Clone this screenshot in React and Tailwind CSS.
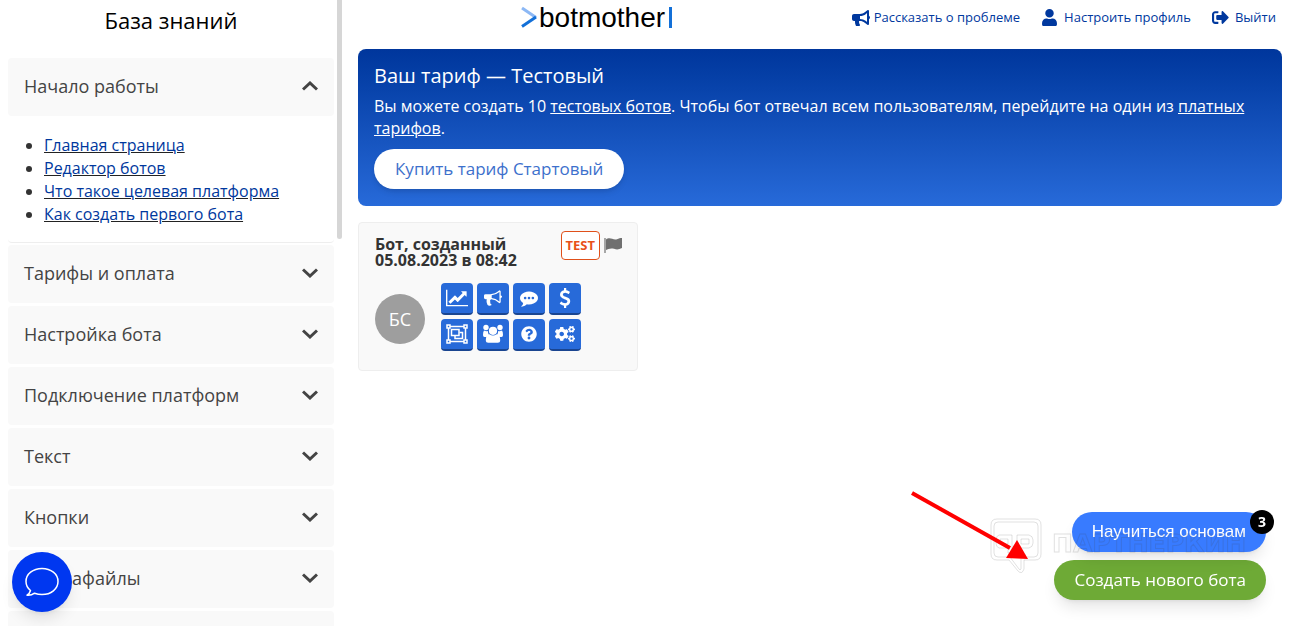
import { FaBullhorn, FaUser, FaSignOutAlt, FaQuestionCircle, FaCogs } from 'react-icons/fa'

const ARTICLES = [
  'Главная страница',
  'Редактор ботов',
  'Что такое целевая платформа',
  'Как создать первого бота',
]

const SECTIONS = [
  'Тарифы и оплата',
  'Настройка бота',
  'Подключение платформ',
  'Текст',
  'Кнопки',
  'Медиафайлы',
  '',
]

function LineChart() {
  return (
    <svg viewBox="0 0 2048 1792" className="h-5 w-[22px]" fill="currentColor">
      <path d="M2048 1536v128h-2048v-1536h128v1408h1920zm-128-1248v435q0 21-19.5 29.5t-35.5-7.5l-121-121-633 633q-10 10-23 10t-23-10l-233-233-416 416-192-192 585-585q10-10 23-10t23 10l233 233 464-464-121-121q-16-16-7.5-35.5t29.5-19.5h435q14 0 23 9t9 23z" />
    </svg>
  )
}

function Horn() {
  return (
    <svg viewBox="0 0 1792 1792" className="size-[18px]" fill="currentColor">
      <path d="M1664 640q53 0 90.5 37.5t37.5 90.5-37.5 90.5-90.5 37.5v384q0 52-38 90t-90 38q-417-347-812-380-58 19-91 66t-31 100.5 40 92.5q-20 33-23 65.5t6 58 33.5 55 48 50 61.5 50.5q-29 58-111.5 83t-168.5 11.5-132-55.5q-7-23-29.5-87.5t-32-94.5-23-89-15-101 3.5-98.5 22-110.5h-122q-66 0-113-47t-47-113v-192q0-66 47-113t113-47h480q435 0 896-384 52 0 90 38t38 90v384zm-128 604v-954q-394 302-768 343v270q377 42 768 341z" />
    </svg>
  )
}

function Comment() {
  return (
    <svg viewBox="0 0 1792 1792" className="size-[18px]" fill="currentColor">
      <path d="M640 896q0-53-37.5-90.5t-90.5-37.5-90.5 37.5-37.5 90.5 37.5 90.5 90.5 37.5 90.5-37.5 37.5-90.5zm384 0q0-53-37.5-90.5t-90.5-37.5-90.5 37.5-37.5 90.5 37.5 90.5 90.5 37.5 90.5-37.5 37.5-90.5zm384 0q0-53-37.5-90.5t-90.5-37.5-90.5 37.5-37.5 90.5 37.5 90.5 90.5 37.5 90.5-37.5 37.5-90.5zm384 0q0 174-120 321.5t-326 233-450 85.5q-110 0-211-18-173 173-435 229-52 10-86 13-12 1-22-6t-13-18q-4-15 20-37 5-5 23.5-21.5t25.5-23.5 23.5-25.5 24-31.5 20.5-37 20-48 14.5-57.5 12.5-72.5q-146-90-229.5-216.5t-83.5-269.5q0-174 120-321.5t326-233 450-85.5 450 85.5 326 233 120 321.5z" />
    </svg>
  )
}

function Dollar() {
  return (
    <svg viewBox="0 0 1792 1792" className="size-5" fill="currentColor">
      <path d="M1362 1185q0 153-99.5 263.5t-258.5 136.5v175q0 14-9 23t-23 9h-135q-13 0-22.5-9.5t-9.5-22.5v-175q-66-9-127.5-31t-101.5-44.5-74-48-46.5-37.5-17.5-18q-17-21-2-41l103-135q7-10 23-12 15-2 24 9l2 2q113 99 243 125 37 8 74 8 81 0 142.5-43t61.5-122q0-28-15-53t-33.5-42-58.5-37.5-66-32-80-32.5q-39-16-61.5-25t-61.5-26.5-62.5-31-56.5-35.5-53.5-42.5-43.5-49-35.5-58-21-66.5-8.5-78q0-138 98-242t255-134v-180q0-13 9.5-22.5t22.5-9.5h135q14 0 23 9t9 23v176q57 6 110.5 23t87 33.5 63.5 37.5 39 29 15 14q17 18 5 38l-81 146q-8 15-23 16-14 3-27-7-3-3-14.5-12t-39-26.5-58.5-32-74.5-26-85.5-11.5q-95 0-155 43t-60 111q0 26 8.5 48t29.5 41.5 39.5 33 56 31 60.5 27 70 27.5q53 20 81 31.5t76 35 75.5 42.5 62 50 53 63.5 31.5 76.5 13 94z" />
    </svg>
  )
}

function ObjectGroup() {
  return (
    <svg viewBox="0 0 22 20" className="h-5 w-[22px]" fill="none" stroke="currentColor" strokeWidth="1.5">
      <path d="M2.500 4v12M19.500 4v12M4 2.500h14M4 17.500h14" />
      <path d="M1 1h3v3H1zM18 1h3v3h-3zM1 16h3v3H1zM18 16h3v3h-3z" />
      <path d="M5.500 5.500h7.500v6H5.500z" />
      <path d="M13.500 8.500h3v6H9v-2.500" />
    </svg>
  )
}

function Users() {
  return (
    <svg viewBox="0 0 22 20" className="h-5 w-[22px]" fill="currentColor">
      <circle cx="4" cy="3.500" r="2.700" />
      <circle cx="18" cy="3.500" r="2.700" />
      <path d="M2 6.500q2 1.200 4 .6-.4 2.600 1.200 4.400Q5.500 11.600 4.500 13H2.500Q1 13 1 11q0-3.500 1-4.500zM20 6.500q-2 1.200-4 .6.400 2.600-1.200 4.400 1.700.1 2.700 1.500h2q1.500 0 1.500-2 0-3.500-1-4.500z" />
      <circle cx="11" cy="6.800" r="4.100" />
      <path d="M7.500 10.300q3.500 2.400 7 0 3.700.4 3.700 6 0 2.500-2.500 2.500H6.300q-2.500 0-2.500-2.500 0-5.600 3.700-6z" />
    </svg>
  )
}

const ACTIONS = [
  { label: 'Статистика', icon: <LineChart /> },
  { label: 'Рассылка', icon: <Horn /> },
  { label: 'Диалоги', icon: <Comment /> },
  { label: 'Платежи', icon: <Dollar /> },
  { label: 'Редактор', icon: <ObjectGroup /> },
  { label: 'Пользователи', icon: <Users /> },
  { label: 'Помощь', icon: <FaQuestionCircle size={16} /> },
  { label: 'Настройки', icon: <FaCogs size={20} /> },
]

function Chevron({ up }) {
  return (
    <svg viewBox="0 0 16 10" className={`h-[10px] w-4 ${up ? 'rotate-180' : ''}`} fill="none" stroke="#444" strokeWidth="3">
      <path d="M1 1.500l7 6.500 7-6.500" />
    </svg>
  )
}

function SectionButton({ title, open = false }) {
  return (
    <button
      type="button"
      aria-expanded={open}
      className="flex h-[58px] w-full shrink-0 items-center justify-between rounded bg-[#f9f9f9] px-4 pb-[2px] text-left text-lg text-[#444]"
    >
      {title}
      <Chevron up={open} />
    </button>
  )
}

function Sidebar() {
  return (
    <aside className="relative w-[342px] shrink-0 overflow-hidden pr-2 pl-2">
      <h2 className="pt-[3px] pb-[21px] text-center text-[22px] leading-[34px] text-black">База знаний</h2>
      <SectionButton title="Начало работы" open />
      <ul className="mb-[2px] list-disc rounded-b border-b border-[#eee] pt-[18px] pb-[16px] pl-9 text-base leading-[23px] text-[#333]">
        {ARTICLES.map((title) => (
          <li key={title}>
            <a href="#" className="text-[#00389e] underline decoration-[#222]">{title}</a>
          </li>
        ))}
      </ul>
      <div className="flex flex-col gap-[3px]">
        {SECTIONS.map((title) => (
          <SectionButton key={title} title={title} />
        ))}
      </div>

      {/* scroll thumb */}
      <div className="absolute top-0 right-0 h-[239px] w-[5px] rounded-b bg-[#d6d6d6]" />
    </aside>
  )
}

function Logo() {
  return (
    <a href="#" aria-label="botmother" className="flex items-center">
      <svg viewBox="0 0 152 33" className="h-[33px] w-[152px]">
        <path d="M1 8l14 9.500" stroke="#8cb8f5" strokeWidth="3" fill="none" />
        <path d="M15 17l-14 9.500" stroke="#1370d8" strokeWidth="3" fill="none" />
        <text x="18" y="27" fontFamily="'Liberation Sans', sans-serif" fontSize="28" fill="#000">botmother</text>
        <path d="M149.500 7v21" stroke="#1370d8" strokeWidth="3" />
      </svg>
    </a>
  )
}

function Header() {
  return (
    <header className="flex h-[33px] items-center justify-between pr-[6px]">
      <div className="pl-[163px]">
        <Logo />
      </div>
      <nav className="flex items-center gap-[21px] pt-[2px] text-[13px] text-[#00389e]">
        <a href="#" className="flex items-center gap-1">
          <FaBullhorn size={18} />
          Рассказать о проблеме
        </a>
        <a href="#" className="flex items-center gap-[6px]">
          <FaUser size={17} />
          Настроить профиль
        </a>
        <a href="#" className="flex items-center gap-[6px]">
          <FaSignOutAlt size={17} />
          Выйти
        </a>
      </nav>
    </header>
  )
}

function TariffBanner() {
  return (
    <section className="mt-4 rounded-lg bg-linear-to-b from-[#00369c] to-[#276ad9] px-4 pt-3 pb-[17px] text-white">
      <h1 className="text-xl leading-[30px]">Ваш тариф — Тестовый</h1>
      <p className="mt-1 mb-[10px] text-base leading-[22px]">
        Вы можете создать 10 <a href="#" className="underline">тестовых ботов</a>. Чтобы бот отвечал всем
        пользователям, перейдите на один из <a href="#" className="underline">платных тарифов</a>.
      </p>
      <button type="button" className="h-10 rounded-full bg-white px-[21px] text-[17px] text-[#3d70cc] shadow-md">
        Купить тариф Стартовый
      </button>
    </section>
  )
}

function BotCard() {
  return (
    <article className="mt-4 h-[149px] w-[280px] rounded border border-[#eee] bg-[#f9f9f9] pt-2 pr-[15px] pl-4">
      <div className="flex">
        <h3 className="flex-1 pt-[5px] text-base leading-4 font-bold text-[#333]">Бот, созданный 05.08.2023 в 08:42</h3>
        <span className="flex h-[29px] items-center rounded border border-[#e0501a] bg-white px-1 text-[13px] font-bold text-[#e8501a]">
          TEST
        </span>
        <svg viewBox="0 0 18 16" className="mt-[6px] ml-1 h-4 w-[18px]" fill="#707070">
          <path d="M0 1h2v15H0z" opacity=".6" />
          <path d="M2 2.500C6-.5 9 3.500 13 2.200 15 1.400 17 .8 18 1v10c-3 1.500-5 2-8 .8-3-1-6 0-8 1.200z" />
        </svg>
      </div>
      <div className="mt-[15px] flex items-center gap-4">
        <div className="mt-1 flex size-[50px] items-center justify-center rounded-full bg-[#9e9e9e] text-lg text-white">БС</div>
        <div className="grid grid-cols-4 gap-1">
          {ACTIONS.map((action) => (
            <button
              key={action.label}
              type="button"
              aria-label={action.label}
              className="flex size-8 items-center justify-center rounded border-b-2 border-[#1a4590] bg-[#276ad9] text-white"
            >
              {action.icon}
            </button>
          ))}
        </div>
      </div>
    </article>
  )
}

function FloatingActions() {
  return (
    <div className="fixed right-[31px] bottom-[26px] flex flex-col items-end gap-2">
      <button type="button" className="relative h-10 rounded-full bg-[#387bff] px-5 font-['Liberation_Sans',sans-serif] text-[17px] text-white shadow-lg">
        Научиться основам
        <span className="absolute -top-[2px] -right-2 flex size-6 items-center justify-center rounded-full bg-black font-['Open_Sans',sans-serif] text-sm font-bold">
          3
        </span>
      </button>
      <button type="button" className="h-10 rounded-full bg-[#6eaa36] px-5 text-[17px] text-white shadow-lg">
        Создать нового бота
      </button>
    </div>
  )
}

function Watermark() {
  return (
    <svg viewBox="0 0 264 60" className="pointer-events-none fixed right-[45px] bottom-[50px] h-[60px] w-[264px]" fill="none" stroke="#444" strokeOpacity=".16">
      <path d="M9 3h38q6 0 6 6v29q0 6-6 6H36v9q-2 6-6 2l-9-11H9q-6 0-6-6V9q0-6 6-6z" />
      <path d="M10 6h36q4 0 4 4v27q0 4-4 4H33v12q-1 2-2 0L22 41H10q-4 0-4-4V10q0-4 4-4z" />
      <path d="M11 19h13v18h-4v-5h-9q-3-1-3-5v-3q0-4 3-5zM29 19h12q4 1 4 5v3q0 4-4 5h-8v5h-4zM12 23h8v5h-8zM33 23h8v5h-8z" />
      <text x="64" y="36" fontFamily="'DejaVu Sans', sans-serif" fontWeight="bold" fontSize="25">ПАРТНЕРКИН</text>
    </svg>
  )
}

function Arrow() {
  return (
    <svg viewBox="0 0 120 70" className="pointer-events-none fixed right-[267px] bottom-[65px] h-[70px] w-[120px]">
      <path d="M2 2l98 55" stroke="#f00" strokeWidth="4" />
      <path d="M118 68l-22-1 11-18z" fill="#f00" />
    </svg>
  )
}

export default function App() {
  return (
    <div className="flex h-screen overflow-hidden bg-white font-['Open_Sans',sans-serif]">
      <Sidebar />
      <main className="min-w-0 flex-1 pr-[15px] pl-4">
        <Header />
        <TariffBanner />
        <BotCard />
      </main>

      <FloatingActions />
      <Watermark />
      <Arrow />

      <button
        type="button"
        aria-label="Открыть чат"
        className="fixed bottom-[14px] left-3 flex size-[60px] items-center justify-center rounded-full bg-[#0037f0] shadow-lg"
      >
        <svg viewBox="0 0 34 30" className="h-[30px] w-[34px]" fill="none" stroke="#fff" strokeWidth="1.500" strokeLinejoin="round">
          <path d="M17 1.500C8 1.500 1 7 1 14.500c0 4 2 7 4.500 9-.5 2-1.500 3.500-3.500 4.700 3 .3 5.500-.5 7.500-2 2.300.8 5 1.300 7.500 1.300 9 0 16-5.500 16-13s-7-13-16-13z" />
        </svg>
      </button>
    </div>
  )
}
